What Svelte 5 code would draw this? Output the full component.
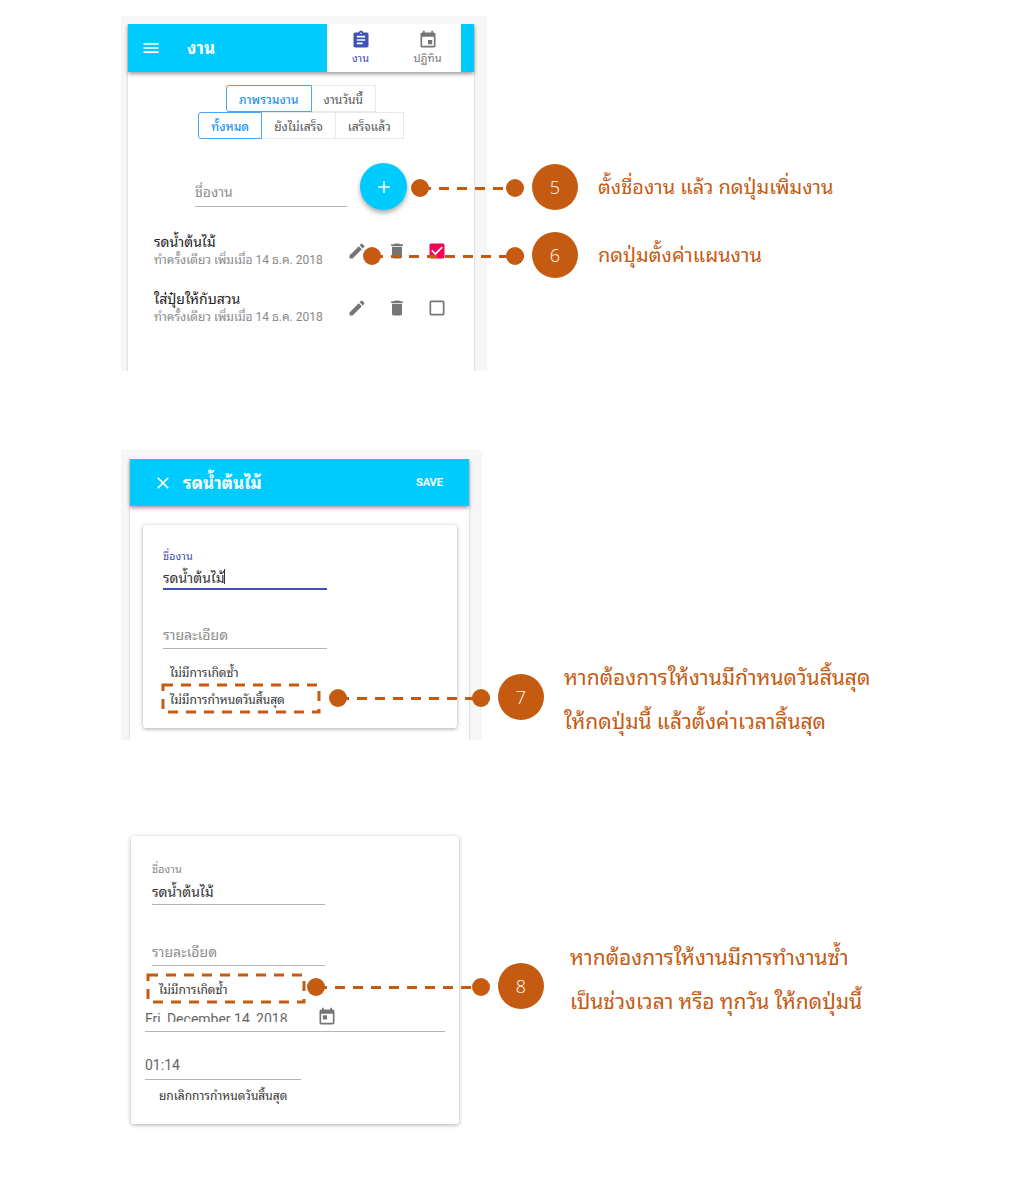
<script>
  let tasks = $state([
    { title: 'รดน้ำต้นไม้', meta: 'ทำครั้งเดียว เพิ่มเมื่อ 14 ธ.ค. 2018', done: true },
    { title: 'ใส่ปุ๋ยให้กับสวน', meta: 'ทำครั้งเดียว เพิ่มเมื่อ 14 ธ.ค. 2018', done: false }
  ]);
  let view = $state('ภาพรวมงาน');
  let filter = $state('ทั้งหมด');
  const views = ['ภาพรวมงาน', 'งานวันนี้'];
  const filters = ['ทั้งหมด', 'ยังไม่เสร็จ', 'เสร็จแล้ว'];
</script>

{#snippet callout(number, lines, reach)}
  <li class="callout">
    <span class="badge">{number}<span class="connector {reach}"></span></span>
    <p>
      {#each lines as line}<span class="line">{line}</span>{/each}
    </p>
  </li>
{/snippet}

{#snippet outline()}
  <svg class="outline" aria-hidden="true"><rect width="100%" height="100%" /></svg>
{/snippet}

<main>
  <section class="step">
    <div class="screen list-screen">
      <div class="phone">
        <header class="bar">
          <button class="icon-button menu" aria-label="เมนู">
            <svg viewBox="0 0 24 24"><path d="M3 18h18v-2H3v2zm0-5h18v-2H3v2zm0-7v2h18V6H3z" /></svg>
          </button>
          <h1>งาน</h1>
          <nav class="tabs">
            <a href="#tasks" class="current">
              <svg viewBox="0 0 24 24"><path d="M19 3h-4.180C14.400 1.840 13.300 1 12 1c-1.300 0-2.400.840-2.820 2H5c-1.100 0-2 .900-2 2v14c0 1.100.900 2 2 2h14c1.100 0 2-.900 2-2V5c0-1.100-.900-2-2-2zm-7 0c.550 0 1 .450 1 1s-.450 1-1 1-1-.450-1-1 .450-1 1-1zm2 14H7v-2h7v2zm3-4H7v-2h10v2zm0-4H7V7h10v2z" /></svg>
              งาน
            </a>
            <a href="#calendar">
              <svg viewBox="0 0 24 24"><path d="M17 12h-5v5h5v-5zM16 1v2H8V1H6v2H5c-1.110 0-2 .900-2 2v14c0 1.100.890 2 2 2h14c1.100 0 2-.900 2-2V5c0-1.100-.900-2-2-2h-1V1h-2zm3 18H5V8h14v11z" /></svg>
              ปฏิทิน
            </a>
          </nav>
        </header>

        <div class="segments">
          {#each views as name}
            <button class:on={view === name} onclick={() => (view = name)}>{name}</button>
          {/each}
        </div>
        <div class="segments">
          {#each filters as name}
            <button class:on={filter === name} onclick={() => (filter = name)}>{name}</button>
          {/each}
        </div>

        <form class="add">
          <input class="field" aria-label="ชื่องาน" placeholder="ชื่องาน" />
          <button type="button" class="fab" aria-label="เพิ่มงาน">
            <svg viewBox="0 0 24 24"><path d="M19 13h-6v6h-2v-6H5v-2h6V5h2v6h6v2z" /></svg>
          </button>
        </form>

        <ul class="tasks">
          {#each tasks as task}
            <li>
              <div class="task-text">
                <strong>{task.title}</strong>
                <small>{task.meta}</small>
              </div>
              <button class="icon-button" aria-label="แก้ไข">
                <svg viewBox="0 0 24 24"><path d="M3 17.250V21h3.750L17.810 9.940l-3.750-3.750L3 17.250zM20.710 7.040a1 1 0 0 0 0-1.410l-2.340-2.340a1 1 0 0 0-1.410 0l-1.830 1.830 3.750 3.750 1.830-1.830z" /></svg>
              </button>
              <button class="icon-button" aria-label="ลบ">
                <svg viewBox="0 0 24 24"><path d="M6 19c0 1.100.900 2 2 2h8c1.100 0 2-.900 2-2V7H6v12zM19 4h-3.500l-1-1h-5l-1 1H5v2h14V4z" /></svg>
              </button>
              <label class="check">
                <input type="checkbox" bind:checked={task.done} aria-label={task.title} />
                <svg viewBox="0 0 24 24" aria-hidden="true">
                  {#if task.done}
                    <path d="M19 3H5c-1.110 0-2 .900-2 2v14c0 1.100.890 2 2 2h14c1.110 0 2-.900 2-2V5c0-1.100-.890-2-2-2zm-9 14l-5-5 1.410-1.410L10 14.170l7.590-7.590L19 8l-9 9z" />
                  {:else}
                    <path d="M19 5v14H5V5h14m0-2H5c-1.100 0-2 .900-2 2v14c0 1.100.900 2 2 2h14c1.100 0 2-.900 2-2V5c0-1.100-.900-2-2-2z" />
                  {/if}
                </svg>
              </label>
            </li>
          {/each}
        </ul>
      </div>
    </div>
    <ol class="callouts wide">
      {@render callout(5, ['ตั้งชื่องาน แล้ว กดปุ่มเพิ่มงาน'], 'short')}
      {@render callout(6, ['กดปุ่มตั้งค่าแผนงาน'], 'medium')}
    </ol>
  </section>

  <section class="step">
    <div class="screen edit-screen">
      <div class="phone">
        <header class="bar edit-bar">
          <button class="icon-button close" aria-label="ปิด">
            <svg viewBox="0 0 24 24"><path d="M19 6.410L17.590 5 12 10.590 6.410 5 5 6.410 10.590 12 5 17.590 6.410 19 12 13.410 17.590 19 19 17.590 13.410 12z" /></svg>
          </button>
          <h2>รดน้ำต้นไม้</h2>
          <button class="save">SAVE</button>
        </header>
        <form class="card">
          <label class="active-label" for="edit-name">ชื่องาน</label>
          <div class="focused">
            <input id="edit-name" class="field active" value="รดน้ำต้นไม้" />
            <span class="caret"></span>
          </div>
          <input class="field details" aria-label="รายละเอียด" placeholder="รายละเอียด" />
          <button type="button" class="option">ไม่มีการเกิดซ้ำ</button>
          <button type="button" class="option marked">ไม่มีการกำหนดวันสิ้นสุด{@render outline()}</button>
        </form>
      </div>
    </div>
    <ol class="callouts">
      {@render callout(7, ['หากต้องการให้งานมีกำหนดวันสิ้นสุด', 'ให้กดปุ่มนี้ แล้วตั้งค่าเวลาสิ้นสุด'], 'medium')}
    </ol>
  </section>

  <section class="step">
    <div class="screen card-screen">
      <form class="card schedule">
        <div class="group">
          <label for="plan-name">ชื่องาน</label>
          <input id="plan-name" class="field" value="รดน้ำต้นไม้" />
          <input class="field details" aria-label="รายละเอียด" placeholder="รายละเอียด" />
        </div>
        <button type="button" class="option marked">ไม่มีการเกิดซ้ำ{@render outline()}</button>
        <div class="date">
          <div class="date-clip"><input aria-label="วันที่" value="Fri, December 14, 2018" /></div>
          <button type="button" class="icon-button" aria-label="เลือกวันที่">
            <svg viewBox="0 0 24 24"><path d="M19 3h-1V1h-2v2H8V1H6v2H5c-1.110 0-2 .900-2 2v14c0 1.100.890 2 2 2h14c1.100 0 2-.900 2-2V5c0-1.100-.900-2-2-2zm0 16H5V8h14v11zM7 10h5v5H7z" /></svg>
          </button>
        </div>
        <input class="field time" aria-label="เวลา" value="01:14" />
        <button type="button" class="option">ยกเลิกการกำหนดวันสิ้นสุด</button>
      </form>
    </div>
    <ol class="callouts repeat">
      {@render callout(8, ['หากต้องการให้งานมีการทำงานซ้ำ', 'เป็นช่วงเวลา หรือ ทุกวัน ให้กดปุ่มนี้'], 'long')}
    </ol>
  </section>
</main>

<style>
  :global(body) {
    margin: 0;
    background: #fff;
  }
  main {
    --cyan: #00cbff;
    --rust: #c55a11;
    --indigo: #3f51b5;
    --grey: #757575;
    box-sizing: border-box;
    padding: 16px 24px 64px 121px;
    font-family: Roboto, "Noto Sans Thai Looped", Loma, Garuda, Waree, Sarabun, sans-serif;
    font-size: 14px;
    color: #333;
  }
  main :global(*) {
    box-sizing: border-box;
  }
  button,
  input {
    font: inherit;
    color: inherit;
    border: 0;
    padding: 0;
    margin: 0;
    background: none;
    border-radius: 0;
    outline: 0;
  }
  button {
    cursor: pointer;
  }
  h1,
  h2,
  p,
  ul,
  ol {
    margin: 0;
    padding: 0;
    list-style: none;
  }
  svg {
    display: block;
    width: 20px;
    height: 20px;
    fill: currentColor;
  }
  .step {
    display: flex;
    align-items: flex-start;
  }
  .step + .step {
    margin-top: 79px;
  }
  .screen {
    flex: 0 1 366px;
    background: #f6f6f6;
    padding: 8px 13px 0 7px;
  }
  .phone {
    background: #fff;
    box-shadow: 0 0 2px #bbb;
    clip-path: inset(0 -4px 0 -4px);
  }
  .list-screen .phone {
    padding-bottom: 35px;
  }
  .bar {
    display: flex;
    align-items: center;
    height: 48px;
    background: var(--cyan);
    color: #fff;
    box-shadow: 0 2px 4px #0006;
    padding: 0 13px;
  }
  h1,
  h2 {
    font-size: 17px;
    line-height: 24px;
    font-weight: 700;
  }
  .icon-button {
    display: grid;
    place-items: center;
    color: var(--grey);
  }
  .bar .icon-button {
    color: #fff;
  }
  .menu {
    margin-right: 26px;
  }
  .tabs {
    display: flex;
    width: 134px;
    margin-left: auto;
    background: #fff;
    align-self: stretch;
  }
  .tabs a {
    flex: 1;
    display: flex;
    flex-direction: column;
    align-items: center;
    padding-top: 6px;
    color: var(--grey);
    text-decoration: none;
    font-size: 11px;
    line-height: 18px;
  }
  .tabs .current {
    color: var(--indigo);
  }
  .segments {
    display: flex;
    justify-content: center;
  }
  .bar + .segments {
    margin-top: 13px;
  }
  .segments button {
    height: 27px;
    padding: 0 12px;
    border: 1px solid #e9e9e9;
    font-size: 12px;
    color: #555;
  }
  .segments button + button {
    border-left: 0;
  }
  .segments .on {
    border-color: #49a5f5;
    color: #2492f0;
    font-weight: 500;
    border-radius: 3px 0 0 3px;
  }
  .add {
    display: flex;
    align-items: flex-start;
    padding: 24px 67px 0;
    gap: 13px;
  }
  .field {
    display: block;
    width: 100%;
    height: 28px;
    padding-bottom: 2px;
    border-bottom: 1px solid #b5b5b5;
    font-size: 14px;
  }
  .field::placeholder {
    color: #8c8c8c;
    opacity: 1;
  }
  .add .field {
    flex: 1;
    min-width: 0;
    margin-top: 16px;
  }
  .fab {
    display: grid;
    place-items: center;
    flex: none;
    width: 47px;
    height: 47px;
    border-radius: 50%;
    background: var(--cyan);
    color: #fff;
    box-shadow: 0 3px 5px #0005;
  }
  .tasks {
    padding: 12px 17px 0 26px;
  }
  .tasks li {
    display: flex;
    align-items: center;
    height: 57px;
  }
  .tasks .icon-button,
  .check {
    width: 40px;
    height: 40px;
    flex: none;
  }
  .task-text {
    flex: 1;
    min-width: 0;
    white-space: nowrap;
  }
  strong,
  small {
    display: block;
    line-height: 18px;
  }
  strong {
    font-size: 14px;
    font-weight: 400;
    color: #222;
  }
  small {
    font-size: 12px;
    color: #888;
  }
  .check {
    display: grid;
    place-items: center;
    color: var(--grey);
  }
  .check input,
  .check svg {
    grid-area: 1 / 1;
  }
  .check input {
    appearance: none;
    width: 20px;
    height: 20px;
  }
  .check svg {
    pointer-events: none;
  }
  .check:has(:checked) {
    color: #f50057;
  }

  .edit-screen {
    flex-basis: 361px;
    padding: 9px 13px 0 9px;
  }
  .edit-screen .phone {
    padding-bottom: 12px;
  }
  .edit-bar {
    height: 47px;
    padding: 0 26px 0 23px;
    gap: 10px;
  }
  .save {
    margin-left: auto;
    font-size: 11px;
    font-weight: 700;
  }
  .card {
    display: flex;
    flex-direction: column;
    align-items: flex-start;
    background: #fff;
    border-radius: 3px;
    box-shadow: 0 1px 4px #0005;
  }
  .edit-screen .card {
    margin: 19px 12px 0 13px;
    padding: 23px 20px 16px;
  }
  label {
    font-size: 11px;
    line-height: 18px;
    color: #888;
  }
  .active-label {
    color: var(--indigo);
  }
  .focused {
    position: relative;
    width: 60%;
  }
  .focused .active {
    height: 24px;
    border-bottom: 2px solid var(--indigo);
  }
  .caret {
    position: absolute;
    left: 61px;
    top: 3px;
    width: 1px;
    height: 15px;
    background: #333;
  }
  .edit-screen .details {
    width: 60%;
    height: 26px;
    margin: 33px 0 9px;
  }
  .option {
    position: relative;
    width: 156px;
    height: 27px;
    padding-left: 7px;
    font-size: 12px;
    text-align: left;
    white-space: nowrap;
  }
  .outline {
    position: absolute;
    inset: 0;
    width: 100%;
    height: 100%;
    overflow: visible;
    fill: none;
    stroke: var(--rust);
    stroke-width: 3px;
    stroke-dasharray: 10 8;
  }

  .card-screen {
    flex-basis: 361px;
    background: none;
    padding: 13px 23px 0 10px;
  }
  .schedule {
    padding: 25px 14px 16px;
  }
  .group {
    width: 100%;
    padding-left: 7px;
  }
  .group label {
    display: block;
  }
  .group .field {
    width: 59%;
    height: 26px;
  }
  .group .details {
    margin: 35px 0 9px;
  }
  .schedule .option {
    margin-left: 3px;
    padding-left: 11px;
  }
  .date {
    display: flex;
    align-items: center;
    width: 100%;
    height: 30px;
    border-bottom: 1px solid #b5b5b5;
  }
  .date-clip {
    width: 172px;
    height: 10px;
    overflow: hidden;
  }
  .date-clip input {
    display: block;
    width: 100%;
    height: 14px;
    font-size: 14px;
    line-height: 14px;
    color: #666;
  }
  .schedule .time {
    width: 52%;
    margin-top: 20px;
    margin-bottom: 1px;
    font-size: 14px;
    color: #666;
  }

  .callouts {
    flex: 1;
    min-width: 0;
    padding: 200px 0 0 16px;
    color: var(--rust);
  }
  .callouts.wide {
    padding: 148px 0 0 45px;
  }
  .callouts.repeat {
    padding-top: 107px;
  }
  .callout {
    display: flex;
    align-items: center;
    gap: 20px;
    font-size: 21px;
    line-height: 44px;
  }
  .callout + .callout {
    margin-top: 22px;
  }
  .callout p {
    min-width: 0;
    padding-top: 6px;
  }
  .wide .callout {
    font-size: 20px;
  }
  .wide p {
    padding-top: 0;
  }
  .repeat .callout {
    gap: 26px;
  }
  .repeat .badge {
    margin-top: 18px;
  }
  .line {
    display: block;
  }
  .badge {
    position: relative;
    display: grid;
    place-items: center;
    flex: none;
    width: 46px;
    height: 46px;
    border-radius: 50%;
    background: var(--rust);
    color: #fff;
    font-family: "Open Sans", sans-serif;
    font-size: 18px;
    font-weight: 300;
  }
  .connector {
    position: absolute;
    right: calc(100% + 8px);
    top: 15px;
    height: 18px;
    background: repeating-linear-gradient(90deg, var(--rust) 0 10px, transparent 10px 18px) 10px 8px / 100% 3px no-repeat;
  }
  .connector::before,
  .connector::after {
    content: "";
    position: absolute;
    width: 18px;
    height: 18px;
    border-radius: 50%;
    background: var(--rust);
  }
  .connector::before {
    left: 0;
  }
  .connector::after {
    right: 0;
  }
  .short {
    width: 113px;
  }
  .medium {
    width: 161px;
  }
  .long {
    width: 183px;
  }
</style>
